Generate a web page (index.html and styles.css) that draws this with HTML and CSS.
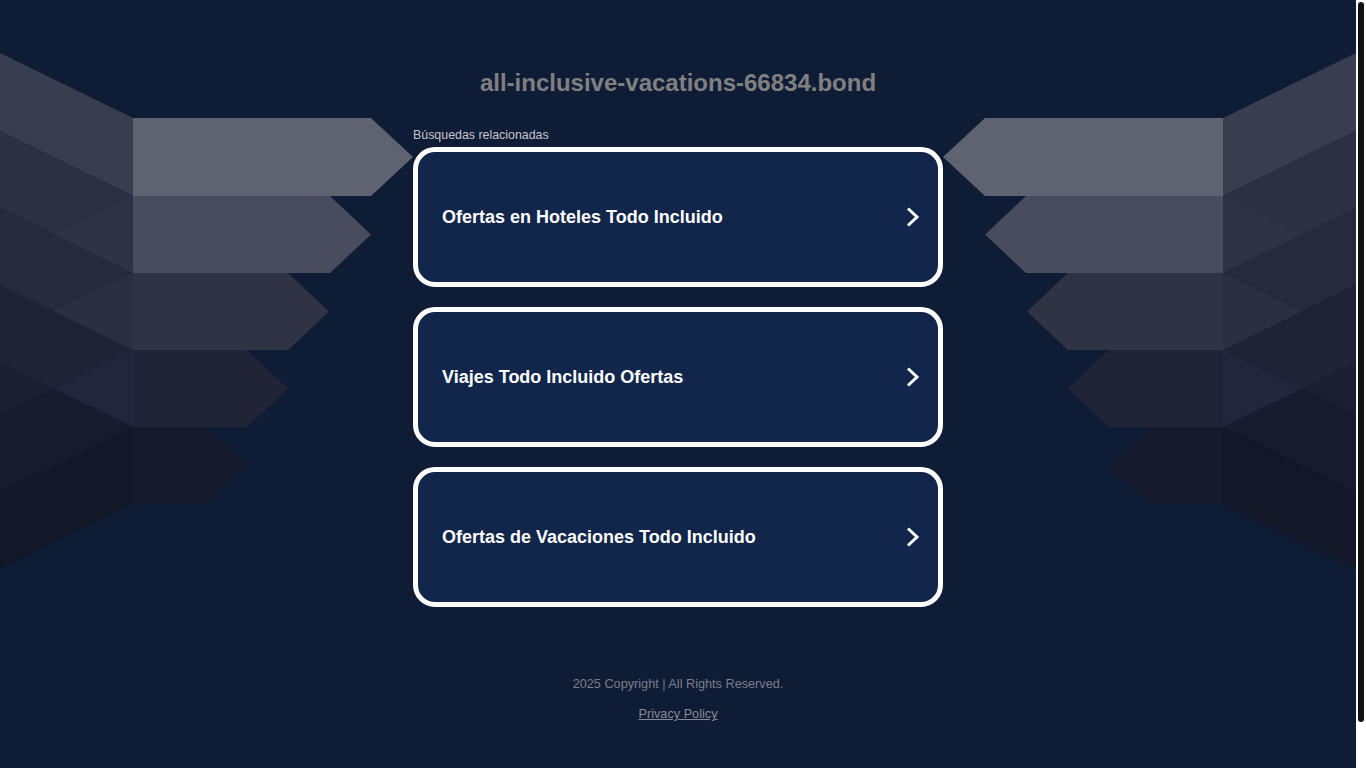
FILE: index.html
```html
<!DOCTYPE html>
<html lang="es">
<head>
<meta charset="utf-8">
<title>all-inclusive-vacations-66834.bond</title>
<link rel="stylesheet" href="styles.css">
</head>
<body>
<div class="page">
  <svg class="wing wing-left" width="413" height="580" viewBox="0 0 413 580" aria-hidden="true">
    <polygon points="0,338 133,273 133,350 0,415" fill="#1b1f31"/>
    <polygon points="0,415 133,350 133,427 0,492" fill="#171b2d"/>
    <polygon points="0,492 133,427 133,504 0,569" fill="#131829"/>
    <polygon points="0,53 133,118 133,196 0,131" fill="#393d50"/>
    <polygon points="0,131 133,196 133,273 0,208" fill="#2c3042"/>
    <polygon points="0,208 133,273 133,350 0,285" fill="#272a3c"/>
    <polygon points="0,285 133,350 133,427 0,362" fill="#1f2336"/>
    <polygon points="54.2,234.5 133,196 133,273" fill="#2f3346"/>
    <polygon points="54.2,311.5 133,273 133,350" fill="#2b2f42"/>
    <polygon points="54.2,388.5 133,350 133,427" fill="#22263a"/>
    <polygon points="133,427 205,427 247,465.5 205,504 133,504" fill="#151a2c"/>
    <polygon points="133,350 247,350 288,388.5 247,427 133,427" fill="#202436"/>
    <polygon points="133,273 288,273 329,311.5 288,350 133,350" fill="#2f3344"/>
    <polygon points="133,196 330,196 371,234.5 330,273 133,273" fill="#494c5d"/>
    <polygon points="133,118 371,118 413,157 371,196 133,196" fill="#5f6270"/>
  </svg>

  <main class="main">
    <h1 class="domain">all-inclusive-vacations-66834.bond</h1>
    <p class="label">Búsquedas relacionadas</p>
    <div class="cards">
      <a class="card" href="#">
        <span class="card-text">Ofertas en Hoteles Todo Incluido</span>
        <svg class="chev" width="14" height="20" viewBox="0 0 14 20" aria-hidden="true"><path d="M2 1.5 L11 10 L2 18.5" fill="none" stroke="#fff" stroke-width="3"/></svg>
      </a>
      <a class="card" href="#">
        <span class="card-text">Viajes Todo Incluido Ofertas</span>
        <svg class="chev" width="14" height="20" viewBox="0 0 14 20" aria-hidden="true"><path d="M2 1.5 L11 10 L2 18.5" fill="none" stroke="#fff" stroke-width="3"/></svg>
      </a>
      <a class="card" href="#">
        <span class="card-text">Ofertas de Vacaciones Todo Incluido</span>
        <svg class="chev" width="14" height="20" viewBox="0 0 14 20" aria-hidden="true"><path d="M2 1.5 L11 10 L2 18.5" fill="none" stroke="#fff" stroke-width="3"/></svg>
      </a>
    </div>
    <footer class="footer">
      <p class="copy">2025 Copyright | All Rights Reserved.</p>
      <p class="privacy"><a href="#">Privacy Policy</a></p>
    </footer>
  </main>

  <svg class="wing wing-right" width="413" height="580" viewBox="0 0 413 580" aria-hidden="true">
    <polygon points="0,338 133,273 133,350 0,415" fill="#1b1f31"/>
    <polygon points="0,415 133,350 133,427 0,492" fill="#171b2d"/>
    <polygon points="0,492 133,427 133,504 0,569" fill="#131829"/>
    <polygon points="0,53 133,118 133,196 0,131" fill="#393d50"/>
    <polygon points="0,131 133,196 133,273 0,208" fill="#2c3042"/>
    <polygon points="0,208 133,273 133,350 0,285" fill="#272a3c"/>
    <polygon points="0,285 133,350 133,427 0,362" fill="#1f2336"/>
    <polygon points="54.2,234.5 133,196 133,273" fill="#2f3346"/>
    <polygon points="54.2,311.5 133,273 133,350" fill="#2b2f42"/>
    <polygon points="54.2,388.5 133,350 133,427" fill="#22263a"/>
    <polygon points="133,427 205,427 247,465.5 205,504 133,504" fill="#151a2c"/>
    <polygon points="133,350 247,350 288,388.5 247,427 133,427" fill="#202436"/>
    <polygon points="133,273 288,273 329,311.5 288,350 133,350" fill="#2f3344"/>
    <polygon points="133,196 330,196 371,234.5 330,273 133,273" fill="#494c5d"/>
    <polygon points="133,118 371,118 413,157 371,196 133,196" fill="#5f6270"/>
  </svg>
</div>
<div class="scrollbar" aria-hidden="true"><div class="scrollbar-thumb"></div></div>
</body>
</html>
```

FILE: styles.css
```css
html {
  background: #0f1c36;
}

body {
  margin: 0;
  background: #0f1c36;
  font-family: "Liberation Sans", Arial, sans-serif;
}

.page {
  display: grid;
  grid-template-columns: 413px 530px 413px;
  align-items: start;
}

.wing {
  display: block;
}

.wing-right {
  transform: scaleX(-1);
}

.main {
  padding-top: 69px;
  padding-bottom: 95px;
}

.domain {
  margin: 0;
  font-size: 24px;
  line-height: 28px;
  font-weight: 700;
  color: #808080;
  text-align: center;
}

.label {
  margin: 30px 0 0;
  font-size: 12.4px;
  line-height: 16px;
  color: #c4c6cc;
}

.cards {
  margin-top: 4px;
  display: flex;
  flex-direction: column;
  gap: 20px;
}

.card {
  box-sizing: border-box;
  height: 140px;
  border: 5px solid #ffffff;
  border-radius: 22px;
  background: #12254b;
  display: flex;
  align-items: center;
  justify-content: space-between;
  padding: 0 18px 0 24px;
  text-decoration: none;
}

.card-text {
  font-size: 18px;
  line-height: 22px;
  font-weight: 700;
  color: #ffffff;
}

.chev {
  display: block;
  flex: none;
}

.footer {
  margin-top: 69px;
  text-align: center;
}

.copy {
  margin: 0;
  font-size: 12.7px;
  line-height: 16px;
  color: #7b7e8b;
}

.privacy {
  margin: 14px 0 0;
  font-size: 12.7px;
  line-height: 16px;
}

.privacy a {
  color: #878a96;
  text-decoration: underline;
}

.scrollbar {
  position: fixed;
  top: 0;
  right: 0;
  width: 10px;
  height: 100vh;
  background: #ffffff;
  box-sizing: border-box;
  padding: 2px 2px 0;
}

.scrollbar-thumb {
  height: 720px;
  background: #111111;
  border-radius: 3px;
}
```
